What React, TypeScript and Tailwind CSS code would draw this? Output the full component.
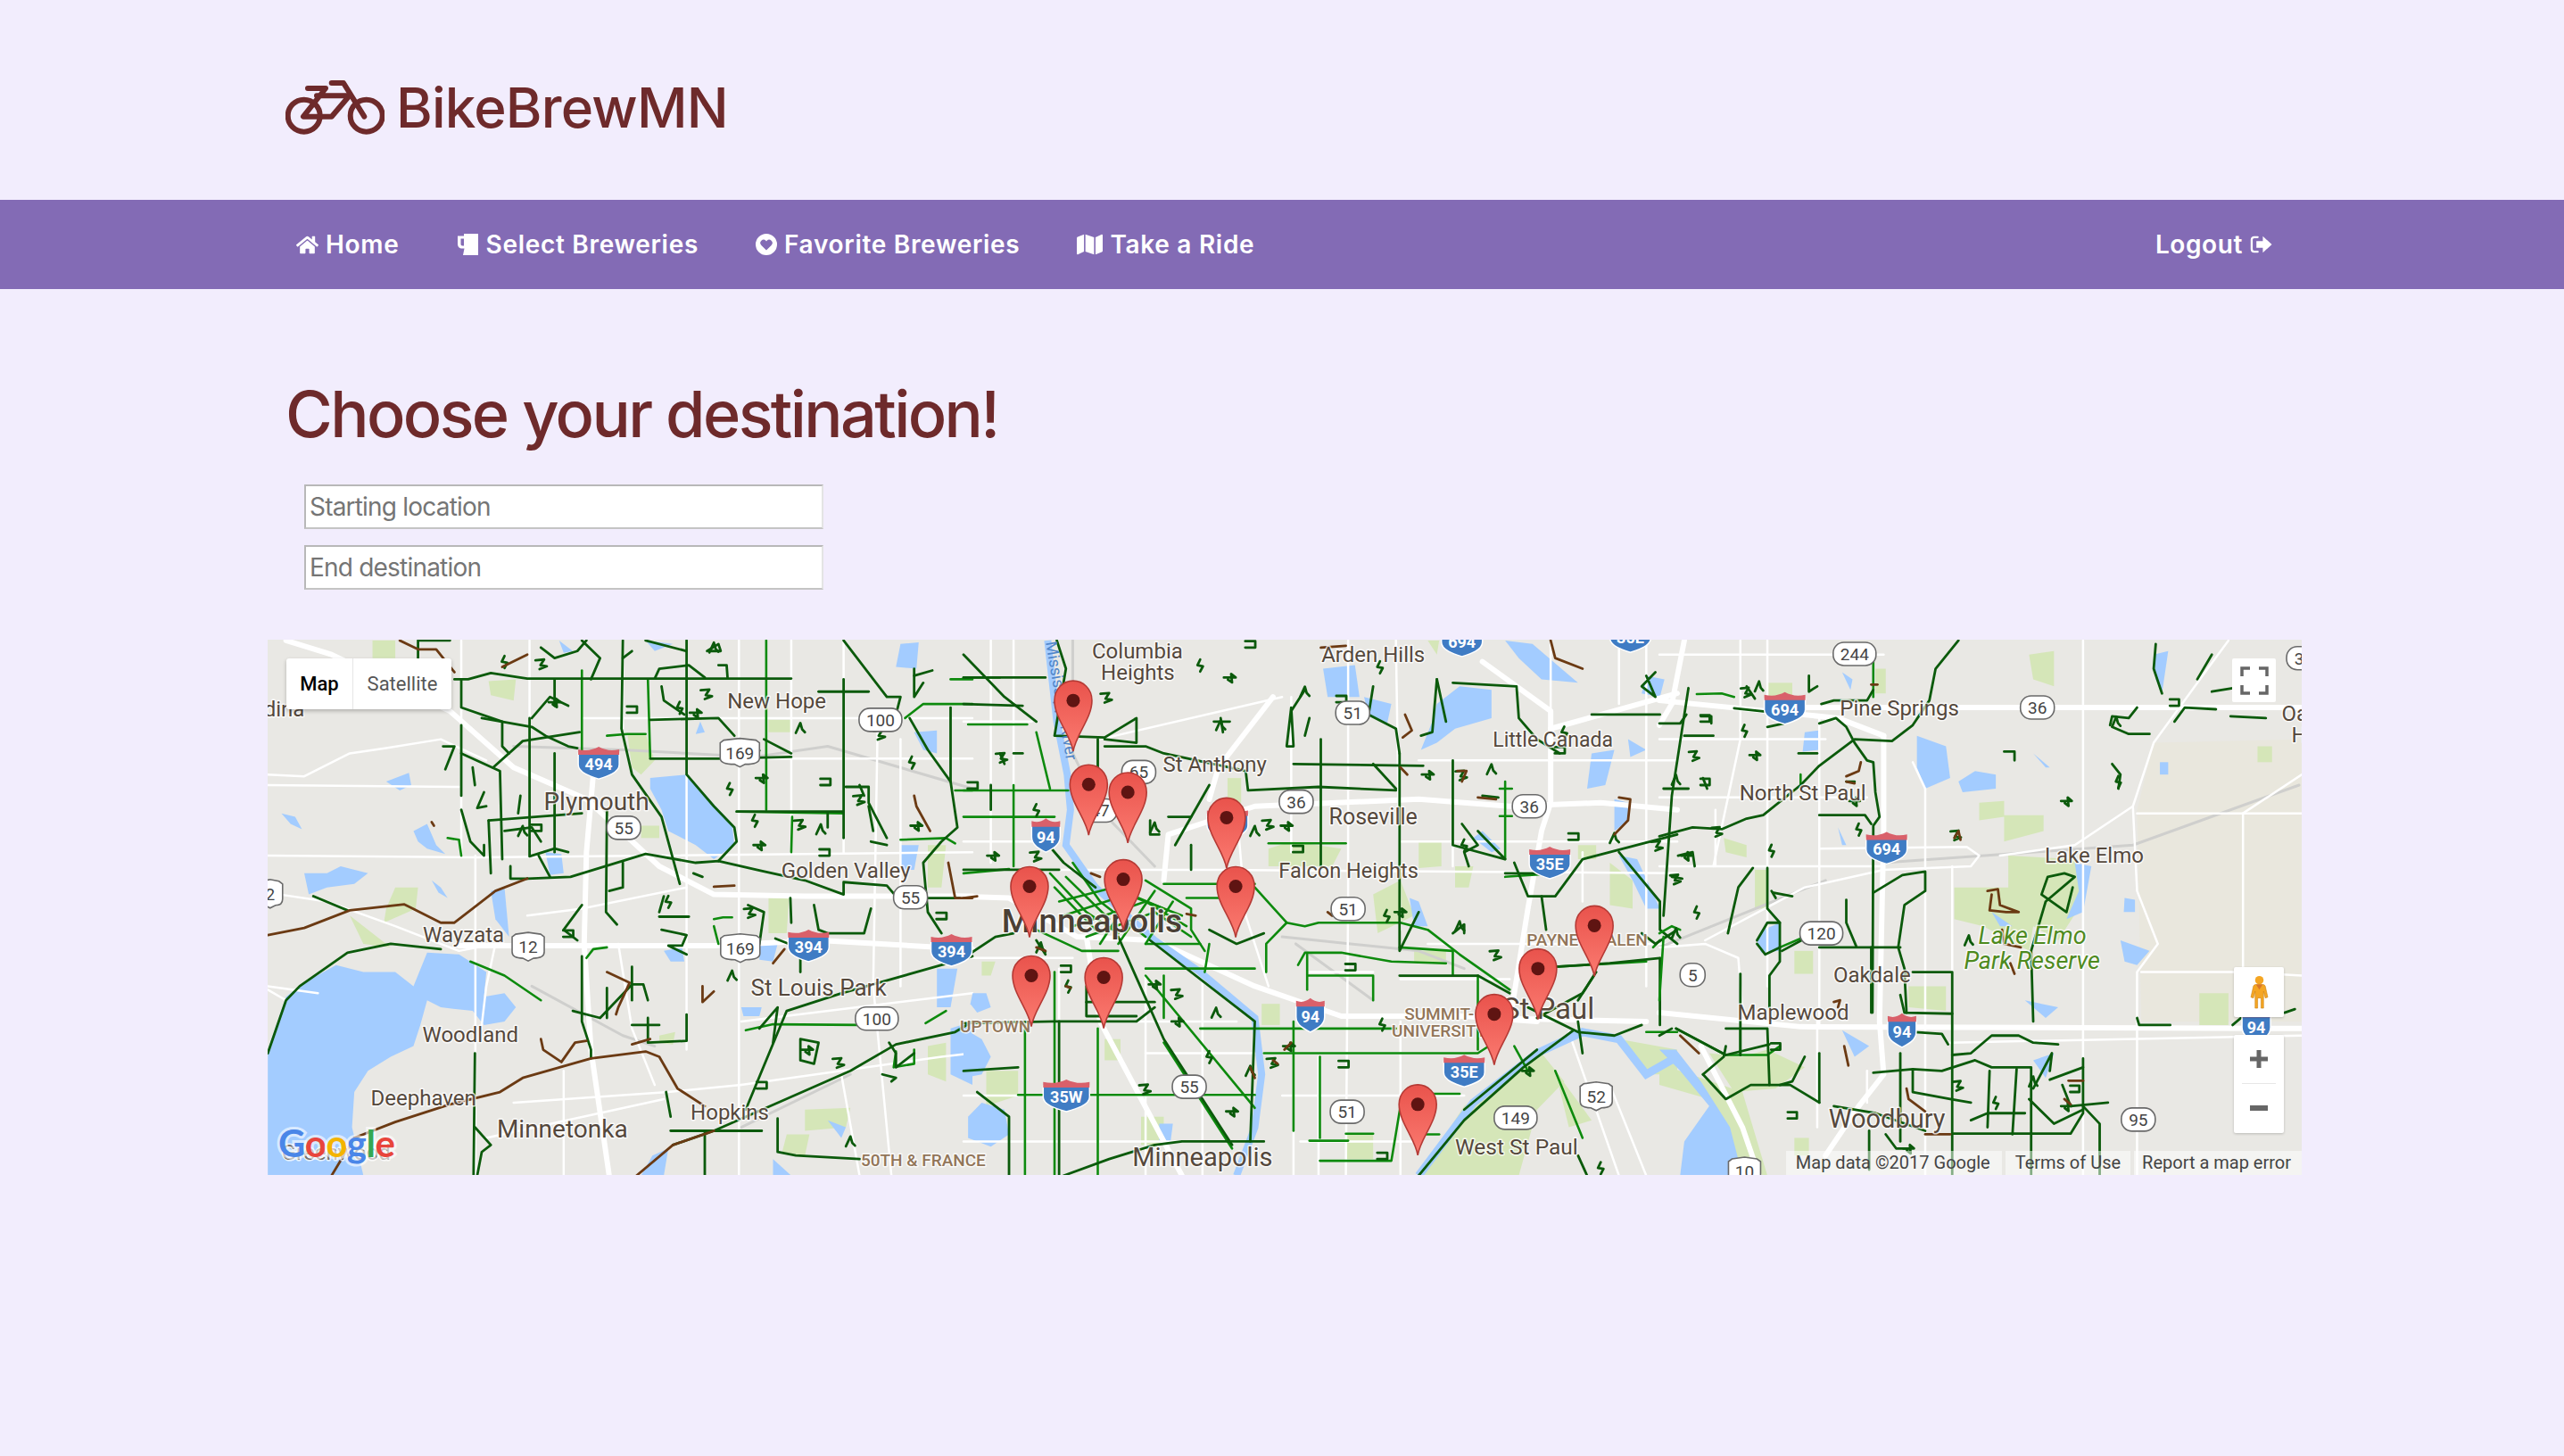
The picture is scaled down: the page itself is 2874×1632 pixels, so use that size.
import React from "react";
import { FaHome, FaMap } from "react-icons/fa";

// crop space transforms, traced coordinates are kept per map section
const A = "matrix(0.5102 0 0 0.3954 -10 -7)";
const B = "matrix(0.5102 0 0 0.3954 780 -7)";
const C = "matrix(0.4656 0 0 0.3954 1560 -7)";
const pa = (x: number, y: number) => [x * 0.5102 - 10, y * 0.3954 - 7];
const pb = (x: number, y: number) => [x * 0.5102 + 780, y * 0.3954 - 7];
const pc = (x: number, y: number) => [x * 0.4656 + 1560, y * 0.3954 - 7];

const DARK = "#0b5a0b";
const BRIGHT = "#0d8a0d";
const BROWN = "#6b3a13";
const WATER = "#a3ccff";
const PARK = "#d5e6b8";
const LAND = "#e9e8e4";

const water = {
  a: [
    "20,1180 60,1030 100,990 170,940 230,960 300,960 340,1000 370,905 440,910 500,960 495,1030 540,1020 565,1060 540,1100 495,1110 470,1070 400,1060 370,1040 355,1110 340,1170 290,1200 240,1240 210,1300 205,1400 230,1537 20,1537",
    "860,410 940,400 1040,540 1045,600 1000,640 960,600 900,560 885,500 860,440",
    "280,420 330,395 335,430 310,445",
    "340,560 370,540 390,600 410,625 370,610 350,590",
    "100,680 150,680 180,660 240,680 210,710 150,720 110,740",
    "50,510 80,520 95,555 70,540",
    "630,620 665,625 670,680 640,685",
    "510,730 540,720 550,860 520,810",
    "380,700 400,720 415,750 395,735",
    "1410,30 1450,25 1445,100 1400,95",
    "850,20 910,30 870,50",
    "660,20 690,50 670,55",
    "1440,280 1490,275 1490,340 1460,330",
    "1490,950 1535,950 1520,1060 1490,1060",
    "1520,1120 1568,1100 1568,1280 1520,1250",
    "1060,1060 1105,1060 1100,1085 1065,1085",
    "1100,880 1140,880 1130,930 1100,925",
    "890,900 930,890 935,930 905,930",
    "1250,1380 1290,1400 1280,1430",
    "865,1480 900,1460 890,1537 840,1537",
    "970,250 980,280 960,285",
    "1410,600 1450,600 1440,670 1410,670",
    "1130,1490 1170,1537 1130,1537",
  ],
  b: [
    "790,100 860,90 870,180 800,180",
    "880,180 940,200 930,260 890,230",
    "1040,200 1090,150 1160,160 1160,240 1080,270 1040,310 1005,330 1030,250",
    "1190,20 1250,30 1350,140 1270,130 1220,70",
    "1380,340 1430,330 1410,430 1370,440",
    "1430,470 1460,480 1460,530 1430,560",
    "1500,120 1540,130 1530,180 1490,170",
    "1440,630 1480,640 1530,780 1500,780 1470,700",
    "1120,580 1140,560 1180,610 1160,620",
    "0,1120 40,1150 60,1200 40,1250 0,1260",
    "40,1330 90,1350 100,1420 60,1455 10,1430 10,1370",
    "20,1020 50,1020 60,1060 30,1075 15,1050",
    "430,1390 460,1390 455,1440 430,1440",
    "980,750 1000,760 1020,830 990,830",
    "1460,300 1500,330 1465,350",
  ],
  c: [
    "720,420 760,390 810,400 810,440 730,450",
    "620,290 690,320 700,410 640,440 620,380",
    "350,280 385,275 385,330 345,335",
    "440,110 465,130 460,160",
    "1000,650 1040,660 1020,790 980,810 1010,730",
    "800,790 850,830 820,830",
    "1110,870 1180,900 1150,940 1120,930",
    "430,550 450,600 440,600",
    "250,840 290,820 290,900 245,905 235,870",
    "1190,60 1225,50 1210,170 1195,130",
    "0,1180 40,1180 100,1270 170,1400 200,1537 50,1537 60,1440 120,1340 50,1240",
    "900,1210 950,1190 930,1260",
    "440,1125 505,1170 470,1200",
    "1120,750 1145,755 1145,790 1118,790",
    "900,340 940,380 930,380",
    "1205,365 1225,365 1225,400 1205,400",
    "880,1040 960,1060 930,1090",
  ],
};

const parks = {
  a: [
    "810,285 850,285 870,360 840,400 820,380",
    "505,135 565,130 560,190 510,175",
    "1120,245 1170,245 1170,280 1120,280",
    "1120,750 1165,750 1160,850 1120,850",
    "300,720 350,720 345,780 275,820 280,780",
    "200,800 290,890 230,880",
    "80,1290 170,1260 190,1310 100,1340",
    "1200,1350 1300,1345 1290,1400 1200,1410",
    "1160,1420 1210,1420 1200,1480 1150,1470",
    "1470,1170 1510,1160 1510,1270 1470,1250",
    "250,20 300,20 300,70 250,70",
    "840,545 880,545 880,580 840,580",
    "1470,600 1510,600 1500,720 1470,720",
    "880,1140 915,1130 910,1165 880,1160",
  ],
  b: [
    "580,410 610,410 610,480 580,480",
    "670,610 720,590 830,610 810,660 670,660",
    "1000,590 1050,590 1050,660 1000,665",
    "1080,660 1120,660 1110,720 1080,720",
    "900,740 960,700 990,800 910,850",
    "990,900 1060,900 1060,940 990,930",
    "655,1050 695,1050 695,1110 655,1110",
    "390,1370 440,1370 440,1450 390,1450",
    "310,1150 345,1150 345,1210 310,1210",
    "50,1240 120,1240 120,1310 50,1340",
    "1100,1340 1270,1190 1320,1270 1260,1350 1220,1537 1000,1537",
    "1300,1240 1380,1380 1330,1400",
    "1440,1150 1568,1180 1568,1250 1500,1250",
    "840,1420 900,1420 900,1490 840,1490",
    "40,930 70,930 60,970 40,970",
    "1020,20 1045,20 1040,60",
    "1350,600 1390,600 1390,640 1350,640",
    "1420,650 1470,700 1470,780 1420,770",
  ],
  c: [
    "890,60 950,50 950,150 900,130",
    "770,480 830,475 830,515 925,515 925,560 830,590 830,520 770,530",
    "710,720 840,720 840,630 1000,640 1020,760 960,870 900,830 890,900 780,830 710,810",
    "0,1220 100,1260 200,1300 260,1537 200,1537 120,1320 0,1280",
    "120,1190 200,1200 260,1180 350,1230 280,1290 180,1300",
    "230,670 260,670 260,780 230,780",
    "155,580 210,600 210,635 160,620",
    "520,100 545,100 545,170 520,170",
    "1300,1020 1370,1020 1370,1110 1300,1110",
    "600,1000 690,1000 690,1070 600,1060",
    "1440,320 1475,320 1475,365 1440,365",
    "325,1430 360,1430 360,1480 325,1480",
    "325,900 370,900 370,965 325,965",
    "260,140 320,140 320,180 260,180",
  ],
};

const roads = {
  a: {
    thick: [
      "60,20 160,60 420,220 560,380 720,470 880,660 1000,740 1200,745 1568,745",
      "440,885 1000,885 1230,870 1568,895",
      "735,400 720,620 715,880 730,1180 770,1537",
    ],
    thin: [
      "20,400 100,405 200,340 280,325 400,300 500,360",
      "20,630 480,635 1568,620",
      "20,1000 130,1020",
      "20,735 150,760 300,830 440,900 520,880",
      "520,880 500,1000 490,1110",
      "476,630 476,1537",
      "1055,20 1055,1537",
      "940,20 940,1180",
      "1170,20 1170,620",
      "1285,20 1285,620",
      "445,20 445,630",
      "595,20 595,630",
      "20,430 440,435",
      "20,1010 60,1040",
      "710,240 1568,240",
      "940,355 1568,355",
      "800,20 800,270",
      "1360,240 1350,1000 1390,1537",
      "1410,300 1410,1000",
      "590,800 710,780 940,720",
      "790,880 820,1120 870,1280",
      "1060,1280 1500,1200 1568,1190",
      "560,1330 900,1300 1060,1280",
      "500,1430 890,1320",
      "1060,1100 1568,1020",
      "1280,1250 1320,1537",
      "670,1240 670,1537",
    ],
    gray: ["560,320 800,330 1090,350 1250,320 1568,440", "600,1000 800,1140 870,1170", "1060,1400 1300,1250"],
  },
  b: {
    thick: [
      "-20,745 100,750 250,860 420,870 640,1000 830,1085 1100,1085 1260,1100",
      "270,860 300,1100 480,1537",
      "440,700 450,570 640,490 1000,470 1200,490 1400,480 1568,500",
      "1130,1090 1500,1100",
      "1290,270 1568,170",
      "680,180 560,380 540,470",
      "1140,80 1290,220 1290,480 1270,560 1240,780 1200,1100",
    ],
    thin: [
      "0,670 110,670 560,670 1568,680",
      "0,445 240,445",
      "0,590 210,590",
      "110,20 110,660",
      "60,20 60,650",
      "600,500 620,800 670,1000",
      "845,20 845,760 840,1537",
      "950,20 960,840",
      "785,300 785,660",
      "720,180 720,620",
      "0,920 240,920",
      "0,1100 600,1100",
      "210,950 210,1537",
      "135,1100 135,1537",
      "295,1120 295,1537",
      "400,970 400,1537",
      "525,950 525,1537",
      "725,1100 725,1537",
      "780,1200 780,1537",
      "960,1100 960,1537",
      "400,1190 1100,1190",
      "0,1310 640,1310",
      "700,1310 1100,1310",
      "0,1440 640,1440",
      "740,1440 1000,1440",
      "0,250 150,250",
      "300,300 700,180",
      "1075,360 1075,660",
      "1190,420 1190,640",
      "960,590 1568,590",
      "1000,360 1568,360",
      "1290,20 1290,270",
      "1440,20 1440,200",
      "1360,620 1360,760",
      "1020,880 1568,880",
      "1500,20 1500,1000",
      "960,980 1200,980",
      "760,960 900,960",
      "1420,1280 1500,1537",
      "1330,1130 1440,1537",
    ],
    gray: [
      "240,20 240,340 300,500 420,660",
      "700,860 1000,900 1100,950",
      "730,880 900,1040",
    ],
  },
  c: {
    thick: [
      "540,290 540,560 530,1100 540,1250 480,1340 400,1480",
      "60,20 30,200 0,260",
      "0,190 430,240 540,290",
      "350,210 1547,210",
      "0,1075 340,1115 1547,1120",
      "100,1170 200,1400 240,1537",
    ],
    thin: [
      "0,60 540,60",
      "195,20 195,300 130,660",
      "260,20 260,1000",
      "385,240 385,1120",
      "0,465 500,465",
      "135,500 135,660",
      "385,610 740,605 770,630 750,660 540,670 350,720 110,870",
      "705,660 705,1537",
      "1020,20 1020,1537",
      "1140,490 1190,310 1320,100 1370,20",
      "1140,490 1000,600 820,630",
      "1140,490 1150,730 1200,880 1150,960 1150,1537",
      "1150,510 1547,510",
      "1405,510 1405,1000",
      "1405,510 1547,400",
      "640,440 640,1537",
      "0,660 540,660",
      "0,890 110,880 190,920 200,1070",
      "1160,960 1400,960 1547,970",
      "700,1160 1547,1140",
      "380,1100 380,1400",
      "500,1240 500,1330",
      "0,300 400,300",
      "610,365 640,440",
    ],
    gray: ["540,650 1140,600 1540,430", "0,890 400,700"],
  },
};

const trails = {
  a: {
    dark: [
      "430,130 460,130 510,112 590,128 870,128 1170,128",
      "870,128 880,100 945,90 980,125",
      "1010,90 1028,90 1030,125",
      "445,130 445,210 535,250 535,320 550,340",
      "490,240 600,265 630,290 680,320 700,325",
      "595,240 595,632 650,610 680,620",
      "600,240 640,180 680,205",
      "650,130 650,205",
      "800,20 797,270 820,400 885,520 925,710",
      "940,20 940,400 1000,490 1045,550 1050,590 1010,645",
      "860,355 1010,355 1170,350",
      "860,245 1010,240 1045,290",
      "885,150 890,190 935,230",
      "1110,300 1170,340",
      "445,260 445,460",
      "445,340 530,390 535,640",
      "515,380 580,305 705,280",
      "445,500 465,590 495,630 495,600",
      "505,530 510,680",
      "505,530 710,510",
      "650,340 650,620",
      "540,560 600,550 620,590",
      "615,630 640,690",
      "553,660 553,695 590,695",
      "590,695 685,690 850,625 960,650 1010,645 1100,672 1200,700 1285,740 1285,705 1380,715 1400,745 1470,750 1540,750",
      "765,500 763,790 787,825",
      "800,650 800,720 770,730",
      "20,1190 60,1040 90,1000 195,905 290,880 400,895",
      "120,745 195,785",
      "710,770 670,840 700,870",
      "710,915 710,1100 730,1180 730,1205",
      "690,1070 750,1090 820,995 845,995 855,1040",
      "820,945 820,1040",
      "765,1005 765,1090",
      "820,1110 880,1110",
      "855,1090 855,1160 940,1155 940,1080",
      "880,803 945,803",
      "885,840 940,855 930,885 900,885 940,910",
      "880,790 890,745",
      "1135,865 1165,880",
      "1070,1350 1160,1070 1280,1020 1500,940 1568,915",
      "910,1450 1000,1410 1300,1240 1400,1165 1530,1130 1568,1100",
      "475,1190 472,1537",
      "475,1400 510,1450 490,1470 480,1537",
      "1140,1375 1140,1470 1180,1480 1320,1490",
      "905,1410 1105,1410",
      "980,1410 980,1537",
      "895,1300 905,1370",
      "1290,435 1340,435 1340,480 1380,580",
      "1285,20 1380,180 1410,180 1400,230",
      "1230,165 1340,165",
      "1440,120 1480,105",
      "1440,100 1440,180 1460,140",
      "1168,750 1170,820",
      "1220,770 1230,840 1250,850 1330,850 1345,780",
      "1075,770 1110,790 1100,880",
      "1190,920 1190,960",
      "1190,1150 1230,1160 1220,1220 1190,1210 1190,1150",
      "1385,1160 1400,1190 1400,1230 1440,1190",
      "1370,1250 1400,1260 1390,1270",
      "1100,1120 1140,1060 1130,1160",
      "1430,240 1470,330 1520,420 1535,550 1500,590 1460,650 1470,790 1500,850",
      "1520,210 1520,420",
      "1050,505 1285,505",
      "1285,130 1285,580",
      "1330,460 1320,430",
      "1345,590 1380,600",
      "420,20 350,20 350,70",
      "620,40 650,70 700,50 720,20",
      "710,20 750,70 730,130",
      "800,70 820,50",
      "985,50 1010,30 1015,50 990,50",
      "405,320 430,320 410,385",
      "470,380 475,430",
      "495,450 480,495 500,490",
      "575,460 570,510",
      "850,20 940,50",
      "955,680 975,690",
      "1250,510 1250,550",
      "1340,490 1350,560",
    ],
    bright: [
      "710,105 710,330",
      "855,130 860,350",
      "1115,20 1115,500",
      "1050,505 1285,510",
      "1172,520 1170,620",
      "1070,1125 1130,1108 1320,1110",
      "465,930 540,970 620,1040",
      "415,580 440,585 445,630",
      "720,920 735,895 765,890",
      "765,290 810,285 850,285",
      "1000,810 1020,805 1040,805",
      "1000,830 1010,880",
      "1420,240 1460,200 1568,200",
      "1410,585 1510,580 1530,595",
      "1520,130 1568,130",
      "1530,445 1568,445",
      "1465,1105 1510,1070",
      "1025,1410 1105,1410",
      "1400,1185 1395,1230 1440,1220 1440,1180",
    ],
    brown: [
      "20,855 100,835 200,785 320,768 400,820 430,820 520,730 590,695",
      "210,1430 300,1385 420,1335 530,1300 580,1260 730,1205 850,1185 880,1200 920,1290 980,1340",
      "160,1537 210,1430",
      "830,1537 910,1450 1000,1410",
      "765,960 815,990 790,1060 785,1080",
      "620,1150 625,1180 665,1215 695,1160 720,1155",
      "975,1000 975,1045 1000,1015",
      "820,1165 860,1150",
      "1000,718 1045,715",
      "1130,935 1155,895",
      "1515,650 1530,750 1568,750",
      "1440,460 1445,490 1475,560",
      "310,20 350,45 390,45 430,110",
      "535,95 590,60",
      "380,535 385,545",
    ],
  },
  b: {
    dark: [
      "0,60 90,180 160,250",
      "0,125 180,125",
      "0,200 130,205",
      "205,20 225,100 200,290 310,295 380,240 380,310 310,300",
      "295,300 295,400",
      "310,320 400,320 440,340 620,390 625,445 780,435 950,445",
      "725,370 1010,375",
      "785,300 785,660",
      "958,340 958,900 1000,790",
      "958,970 1130,970 1200,1020",
      "540,430 465,600",
      "500,600 500,670",
      "450,520 500,520",
      "410,530 410,570 430,570",
      "1075,140 1215,150 1220,240 1260,300 1310,340",
      "1040,130 1030,280 1005,290",
      "720,210 710,320 725,320 720,210",
      "900,150 890,230 950,270 958,340",
      "1060,250 1040,130",
      "1075,360 1075,600 1190,640 1130,560",
      "1095,540 1130,600 1100,620 1110,660",
      "1190,680 1300,680",
      "1210,650 1240,745 1300,745 1360,640 1420,620 1568,570",
      "1440,620 1530,760 1530,840 1568,880",
      "1270,745 1280,840",
      "1380,230 1530,230",
      "1500,120 1520,180 1490,150 1520,110",
      "1260,1090 1360,1020 1390,960",
      "1350,1040 1385,970",
      "1300,945 1420,935 1530,920 1530,1110",
      "1240,1060 1350,1130 1430,1140 1490,1110",
      "1000,1537 1100,1380 1230,1230 1340,1125",
      "1100,1350 1260,1180",
      "1350,1100 1360,1190",
      "540,840 600,880 660,850",
      "340,860 440,1150 590,1450",
      "410,870 640,1100 630,1440",
      "0,920 70,860 110,850",
      "160,870 180,910",
      "0,1240 120,1230",
      "30,1300 100,1370 100,1537",
      "0,1105 200,1100 380,1100 420,1060",
      "210,1100 210,1537",
      "270,1045 420,1045",
      "270,1000 270,1085 380,1085",
      "220,1537 320,1490 420,1450 480,1440 660,1440",
      "0,670 210,670",
      "950,440 900,370",
      "1140,460 1175,465",
      "1370,1537 1350,1480",
      "180,590 220,650 290,720",
      "60,430 60,500",
      "130,340 110,340",
      "80,340 90,370",
      "550,250 585,250",
      "565,240 570,280",
      "750,160 720,220",
      "760,240 750,290",
      "1490,850 1520,880 1568,840",
      "1075,850 1100,825 1100,850",
    ],
    bright: [
      "0,520 200,520",
      "0,445 230,445",
      "110,430 110,660",
      "0,125 80,125",
      "10,258 140,258",
      "160,280 190,440",
      "670,595 840,595",
      "640,720 710,820 750,830 780,820 960,820 1020,840 1090,910 1200,1010",
      "710,820 665,880 665,960",
      "440,710 640,710",
      "490,750 560,750",
      "400,700 500,780 500,840 530,900",
      "240,650 300,760 400,860",
      "190,680 270,790 340,850",
      "210,760 330,720 440,780",
      "220,800 360,740 480,800",
      "240,830 400,760 490,830",
      "270,860 420,790 500,860",
      "200,720 290,840",
      "225,690 320,810",
      "380,720 300,880",
      "420,730 340,880",
      "460,760 400,880",
      "160,840 260,900 340,900",
      "400,880 520,880",
      "735,940 750,905 830,905 940,930 1060,935",
      "755,910 755,1010",
      "755,970 900,970 900,1040",
      "520,1120 950,1120",
      "660,1190 1130,1190 1190,1140",
      "725,1100 725,1410",
      "783,1200 783,1430",
      "760,1438 845,1438",
      "840,1418 900,1418",
      "783,1495 940,1495 960,1340",
      "1020,1305 1090,1305",
      "1010,1420 1045,1420",
      "200,960 200,1537",
      "135,1110 135,1537",
      "295,1120 295,1537",
      "400,970 640,1345",
      "120,1308 640,1308",
      "440,1160 590,1460",
      "400,950 640,950",
      "440,970 440,1090",
      "540,880 530,960",
      "0,680 100,668",
      "1130,970 1130,1180",
      "1075,900 1075,970",
      "958,890 1075,900",
      "1190,420 1190,640",
      "1178,440 1205,440",
      "1178,518 1205,518",
      "1190,690 1300,680",
      "1300,1240 1360,1430",
      "1210,1170 1240,1240",
      "1300,945 1500,930",
      "1500,1130 1568,1130",
      "1515,890 1530,870",
    ],
    brown: [
      "970,230 985,275 965,295",
      "785,40 840,35",
      "1290,20 1300,70 1360,100",
      "1440,465 1465,470 1460,530 1430,570",
      "0,750 30,745",
      "800,790 810,800",
      "1085,390 1105,390 1095,420",
      "960,380 975,400",
      "280,680 300,690",
      "630,1230 640,1260",
      "680,1210 690,1220",
      "705,1180 720,1160",
      "225,1000 235,1005",
      "1130,465 1170,470",
      "160,890 180,900",
      "490,795 510,800",
    ],
  },
  c: {
    dark: [
      "720,20 665,100 650,190 610,260 560,305 470,300 385,375 340,430 250,515 210,525 150,555 80,550 0,575",
      "385,255 425,240 450,265 470,310 500,360 515,365 520,450 530,520 515,545 513,1075",
      "180,212 260,222",
      "70,155 30,460 10,800",
      "0,255 50,255 65,230",
      "60,290 130,290",
      "100,235 125,235 125,255",
      "210,150 230,185",
      "385,515 495,515 510,540",
      "450,420 470,420",
      "515,735 585,685 640,675 640,730 590,770 575,890 595,970",
      "450,755 450,820 475,890 385,890 580,890",
      "510,890 510,1075",
      "580,1025 590,1075 705,1078",
      "610,960 705,960 705,1537",
      "590,960 595,1075",
      "165,850 190,720 225,665",
      "260,665 260,780 290,820 290,930 265,970 265,1060",
      "295,900 350,865",
      "235,870 260,820 290,820",
      "235,880 255,910 290,890",
      "275,735 320,745",
      "195,965 195,1195",
      "40,1120 160,1195 265,1165",
      "160,1120 260,1120 265,1280",
      "105,1250 155,1200 160,1170",
      "105,1250 160,1320 220,1280 315,1280 385,1330",
      "385,1190 385,1330",
      "350,1200 320,1270 290,1280",
      "515,1245 610,1235 680,1240 760,1210 800,1230 895,1230 895,1537",
      "705,1195 750,1190 800,1140 865,1140 900,1160 960,1165",
      "610,1240 610,1300 700,1320 750,1330",
      "580,1190 580,1440",
      "615,1130 680,1135 695,1165",
      "705,1418 990,1418 1020,1360 1020,1205",
      "1020,1340 1060,1390 1060,1537",
      "940,1265 1020,1230",
      "795,1240 790,1400",
      "860,1235 850,1420",
      "900,1290 945,1190 940,1240",
      "890,1320 950,1390 1020,1350",
      "970,1280 990,1340 1080,1330",
      "750,1380 790,1360 880,1360",
      "420,1340 520,1360 640,1410",
      "505,1410 505,1520",
      "545,1420 570,1460 600,1460",
      "900,1100 895,900 930,760 1000,690 975,680 935,690 920,740 980,790 995,720",
      "1240,250 1265,210 1340,215",
      "1375,235 1460,240",
      "1085,260 1090,235 1130,240 1150,210",
      "1090,265 1130,285 1180,285",
      "1090,370 1110,400 1105,440",
      "1195,30 1190,100 1210,170",
      "1295,130 1330,60",
      "1330,165 1380,155",
      "1150,1090 1155,1110 1230,1110",
      "1380,1110 1400,1090",
      "1505,1075 1530,1065",
      "0,1140 30,1120",
      "335,340 380,340",
      "360,120 360,165 380,150",
      "45,630 80,620 85,660",
      "30,690 55,695",
      "105,410 115,440",
      "270,730 280,750",
      "10,440 70,440",
      "830,335 855,335 855,360",
      "260,265 300,255",
      "390,200 420,190 500,190 515,160",
    ],
    bright: [
      "90,172 150,170 180,180",
      "515,50 515,180",
      "340,400 340,430",
      "10,860 0,1040",
      "0,850 30,830 50,840",
      "40,1120 160,1195 260,1195 290,1170",
      "195,1120 195,1195",
      "290,890 350,860",
    ],
    brown: [
      "450,405 480,390 485,365",
      "450,420 470,425",
      "50,1140 95,1190",
      "790,730 815,725 820,770 865,790 835,790 795,785 800,740",
      "825,840 830,880 870,890",
      "845,935 855,965",
      "445,1170 455,1225",
      "595,1290 600,1320 640,1355",
      "640,1420 700,1420",
      "985,1268 1020,1268",
      "975,1320 990,1335",
      "420,1045 435,1040 430,1060",
      "510,145 525,145",
      "710,580 720,560 725,585",
    ],
  },
};

// small squiggles of the trail layer, stamped at the places they show up
const stamps = [
  [-14, -9, 5, -11, -3, 5, 11, 8, -5, 16],
  [-10, 14, 0, -14, 4, 4, 10, 12],
  [-11, -8, 11, -8, 11, 10, -11, 10],
  [0, -16, -6, 0, 6, 3, 0, 18],
  [-13, 0, 13, 0, 3, -10, 5, 14, -4, 6],
];
const bits = {
  a: [622, 85, 1000, 40, 820, 215, 925, 210, 960, 225, 985, 170, 1190, 268, 1245, 420, 1035, 440, 1105, 410, 1190, 540, 1235, 555, 1243, 620, 1090, 530, 1100, 600, 1080, 790, 1040, 970, 680, 850, 900, 760, 1205, 1180, 1275, 1215, 1300, 1440, 1105, 1280, 1435, 365, 1445, 545, 1365, 285, 580, 560, 610, 550, 540, 80, 650, 195, 1320, 470, 1090, 320, 1500, 800],
  b: [85, 350, 565, 260, 20, 430, 160, 500, 65, 630, 160, 630, 420, 550, 630, 30, 520, 90, 585, 125, 315, 180, 750, 165, 830, 185, 915, 95, 1020, 400, 1095, 400, 1160, 385, 1310, 330, 1320, 280, 710, 545, 670, 540, 640, 560, 735, 610, 930, 800, 960, 790, 1170, 910, 1090, 830, 850, 945, 920, 1108, 715, 1170, 680, 1215, 630, 1240, 835, 1220, 540, 1200, 590, 1355, 400, 1290, 170, 890, 225, 950, 230, 1000, 420, 995, 470, 1020, 555, 1075, 920, 1480, 1400, 1515, 1240, 1240, 1525, 600, 1430, 580, 1340, 575, 1100, 600, 470, 1100],
  c: [210, 165, 240, 150, 110, 240, 205, 275, 230, 345, 85, 345, 40, 415, 110, 420, 270, 615, 65, 630, 40, 695, 1100, 250, 1240, 195, 1105, 420, 980, 475, 715, 570, 745, 870, 320, 1365, 480, 555, 470, 475, 720, 1280, 900, 1270, 1000, 1290, 810, 1330, 600, 1460, 140, 560, 40, 850, 280, 1170, 90, 790, 980, 1340],
};

type Label = [number, number, string, number, string?, number?];
const DK = "#55483c";
const TAN = "#927558";
const labels: { p: (x: number, y: number) => number[]; list: Label[] }[] = [
  {
    p: pa,
    list: [
      [56, 236, "dina", 24],
      [1138, 212, "New Hope", 24],
      [742, 500, "Plymouth", 28],
      [1290, 692, "Golden Valley", 24],
      [450, 876, "Wayzata", 24],
      [1230, 1028, "St Louis Park", 26],
      [465, 1158, "Woodland", 24],
      [362, 1338, "Deephaven", 24],
      [667, 1430, "Minnetonka", 28],
      [1035, 1378, "Hopkins", 24],
      [170, 1492, "Greenwood", 24, "#77716a"],
      [1460, 1510, "50TH & FRANCE", 19, TAN, 500],
    ],
  },
  {
    p: pb,
    list: [
      [382, 72, "Columbia", 24],
      [383, 132, "Heights", 24],
      [900, 80, "Arden Hills", 24],
      [552, 392, "St Anthony", 24],
      [1295, 322, "Little Canada", 23],
      [900, 542, "Roseville", 25],
      [846, 692, "Falcon Heights", 23.5],
      [282, 848, "Minneapolis", 37, "#4a3f35", 500],
      [525, 1510, "Minneapolis", 29],
      [70, 1130, "UPTOWN", 19, TAN, 500],
      [1370, 885, "PAYNE PHALEN", 19, TAN, 500],
      [1045, 1095, "SUMMIT-", 19, TAN, 500],
      [1045, 1142, "UNIVERSITY", 19, TAN, 500],
      [1285, 1092, "St Paul", 33],
      [1215, 1478, "West St Paul", 24.5],
    ],
  },
  {
    p: pc,
    list: [
      [578, 232, "Pine Springs", 24],
      [345, 474, "North St Paul", 24],
      [1047, 650, "Lake Elmo", 24],
      [512, 990, "Oakdale", 24],
      [322, 1095, "Maplewood", 24],
      [548, 1400, "Woodbury", 29],
      [1530, 248, "Oa", 24],
      [1540, 308, "H", 24],
    ],
  },
];

function Lines({ list, color, width }: { list: string[]; color: string; width: number }) {
  return (
    <g fill="none" stroke={color} strokeWidth={width} strokeLinejoin="round" strokeLinecap="round">
      {list.map((d, i) => (
        <polyline key={i} points={d} vectorEffect="non-scaling-stroke" />
      ))}
    </g>
  );
}

function Section({ m, k }: { m: string; k: "a" | "b" | "c" }) {
  return (
    <g transform={m}>
      {parks[k].map((d, i) => (
        <polygon key={i} points={d} fill={PARK} />
      ))}
      {water[k].map((d, i) => (
        <polygon key={i} points={d} fill={WATER} />
      ))}
      <Lines list={roads[k].gray} color="#cfcfcd" width={3} />
      <Lines list={roads[k].thin} color="#ffffff" width={2.5} />
      <Lines list={roads[k].thick} color="#ffffff" width={6} />
    </g>
  );
}

function SectionTrails({ m, k }: { m: string; k: "a" | "b" | "c" }) {
  const b = bits[k];
  const squiggles: string[] = [];
  for (let i = 0; i < b.length; i += 2) {
    const s = stamps[(i / 2) % stamps.length];
    const pts: string[] = [];
    for (let j = 0; j < s.length; j += 2) pts.push(`${b[i] + s[j]},${b[i + 1] + s[j + 1]}`);
    squiggles.push(pts.join(" "));
  }
  return (
    <g transform={m}>
      <Lines list={trails[k].bright} color={BRIGHT} width={2.6} />
      <Lines list={trails[k].dark} color={DARK} width={2.8} />
      <Lines list={squiggles} color={DARK} width={2.8} />
      <Lines list={trails[k].brown} color={BROWN} width={2.8} />
    </g>
  );
}

function Interstate({ x, y, t, w = 46 }: { x: number; y: number; t: string; w?: number }) {
  const h = w < 40 ? 38 : 36;
  return (
    <g transform={`translate(${x - w / 2},${y - h / 2})`}>
      <path d={`M0 ${h * 0.2} H${w} V${h * 0.55} C${w} ${h * 0.8} ${w * 0.7} ${h * 0.92} ${w / 2} ${h} C${w * 0.3} ${h * 0.92} 0 ${h * 0.8} 0 ${h * 0.55} Z`} fill="#3f7cc4" stroke="#fff" strokeWidth={1.5} />
      <path d={`M0 ${h * 0.25} V${h * 0.08} C${w * 0.2} ${h * 0.14} ${w * 0.35} ${h * 0.1} ${w / 2} 0 C${w * 0.65} ${h * 0.1} ${w * 0.8} ${h * 0.14} ${w} ${h * 0.08} V${h * 0.25} Z`} fill="#d9606a" />
      <text x={w / 2} y={h * 0.72} textAnchor="middle" fontSize={18} fontWeight={700} fill="#fff" fontFamily="Roboto, sans-serif">
        {t}
      </text>
    </g>
  );
}

function StateRoad({ x, y, t }: { x: number; y: number; t: string }) {
  const w = 18 + t.length * 10;
  return (
    <g>
      <rect x={x - w / 2} y={y - 13} width={w} height={26} rx={12} fill="#fff" stroke="#6a6a6a" strokeWidth={1.6} />
      <text x={x} y={y + 7} textAnchor="middle" fontSize={19} fill="#444" fontFamily="Roboto, sans-serif">
        {t}
      </text>
    </g>
  );
}

function UsRoad({ x, y, t }: { x: number; y: number; t: string }) {
  const w = 20 + t.length * 8;
  return (
    <g>
      <path
        d={`M${x - w / 2} ${y - 11} L${x - w / 2 + 4} ${y - 14} L${x} ${y - 16} L${x + w / 2 - 4} ${y - 14} L${x + w / 2} ${y - 11} V${y + 6} Q${x + w / 2} ${y + 13} ${x + 6} ${y + 13} L${x} ${y + 16} L${x - 6} ${y + 13} Q${x - w / 2} ${y + 13} ${x - w / 2} ${y + 6} Z`}
        fill="#fff"
        stroke="#6a6a6a"
        strokeWidth={1.6}
      />
      <text x={x} y={y + 7} textAnchor="middle" fontSize={19} fill="#444" fontFamily="Roboto, sans-serif">
        {t}
      </text>
    </g>
  );
}

function Pin({ x, y }: { x: number; y: number }) {
  // x,y = centre of the head
  return (
    <g transform={`translate(${x},${y})`}>
      <path d="M0 57 C-3 38 -21 20 -21 0 C-21 -13 -11 -22 0 -22 C11 -22 21 -13 21 0 C21 20 3 38 0 57 Z" fill="url(#pinFill)" stroke="#b53a35" strokeWidth={1.6} />
      <circle cx={0} cy={0} r={7.5} fill="#5f1412" />
    </g>
  );
}

function at(p: (x: number, y: number) => number[], x: number, y: number) {
  const [a, b] = p(x, y);
  return { x: a, y: b };
}

const pins = [
  [241, 190],
  [275, 428],
  [361, 450],
  [578, 522],
  [598, 717],
  [351, 697],
  [145, 717],
  [149, 970],
  [308, 975],
  [998, 1335],
  [1166, 1079],
  [1262, 950],
  [1386, 828],
];

function MapCanvas() {
  return (
    <svg viewBox="0 0 2280 600" className="absolute inset-0 block h-full w-full">
      <defs>
        <linearGradient id="pinFill" x1="0" y1="0" x2="0" y2="1">
          <stop offset="0" stopColor="#e9534c" />
          <stop offset="1" stopColor="#fb7a70" />
        </linearGradient>
      </defs>
      <rect width="2280" height="600" fill={LAND} />
      <polygon transform={C} points="1150,500 1190,310 1547,300 1547,1100 1160,1100" fill="#e9e7dd" />
      <Section m={A} k="a" />
      <Section m={B} k="b" />
      <Section m={C} k="c" />
      <g transform={B}>
        <polyline
          points="185,20 205,250 228,400 235,500 225,600 290,720 420,870 520,960 640,1090 655,1250 640,1400 600,1537"
          fill="none"
          stroke={WATER}
          strokeWidth={8}
          vectorEffect="non-scaling-stroke"
        />
        <polyline
          points="1000,1537 1120,1330 1260,1190 1360,1130 1440,1150 1500,1250 1568,1200"
          fill="none"
          stroke={WATER}
          strokeWidth={9}
          vectorEffect="non-scaling-stroke"
        />
      </g>
      <SectionTrails m={A} k="a" />
      <SectionTrails m={B} k="b" />
      <SectionTrails m={C} k="c" />

      <text transform="translate(872,3) rotate(80)" fontSize={18} fill="#4f85c9" fontFamily="Roboto, sans-serif">
        Mississippi River
      </text>

      <g fontFamily="Roboto, sans-serif" textAnchor="middle" stroke="#ffffff" strokeOpacity={0.75} strokeWidth={3} paintOrder="stroke" strokeLinejoin="round">
        {labels.map((g) =>
          g.list.map(([x, y, t, s, c, w], i) => {
            const q = g.p(x, y);
            return (
              <text key={t + i} x={q[0]} y={q[1]} fontSize={s} fill={c ?? DK} fontWeight={w ?? 400}>
                {t}
              </text>
            );
          }),
        )}
        <g fill="#4e8a1e" fontStyle="italic" fontSize={27}>
          <text x={pc(898, 880)[0]} y={pc(898, 880)[1]}>
            Lake Elmo
          </text>
          <text x={pc(897, 950)[0]} y={pc(897, 950)[1]}>
            Park Reserve
          </text>
        </g>
      </g>

      <Interstate {...at(pa, 747, 367)} t="494" />
      <Interstate {...at(pa, 1208, 885)} t="394" />
      <Interstate {...at(pa, 1522, 898)} t="394" />
      <Interstate {...at(pb, 181, 572)} t="94" w={32} />
      <Interstate {...at(pb, 580, 540)} t="694" />
      <Interstate {...at(pb, 1288, 650)} t="35E" />
      <Interstate {...at(pb, 226, 1310)} t="35W" w={52} />
      <Interstate {...at(pb, 762, 1082)} t="94" w={32} />
      <Interstate {...at(pb, 1100, 1240)} t="35E" />
      <Interstate {...at(pb, 1095, 20)} t="694" />
      <Interstate {...at(pb, 1465, 8)} t="35E" />
      <Interstate {...at(pc, 302, 212)} t="694" />
      <Interstate {...at(pc, 547, 608)} t="694" />
      <Interstate {...at(pc, 584, 1125)} t="94" w={32} />
      <Interstate {...at(pc, 1437, 1112)} t="94" w={32} />

      <StateRoad {...at(pa, 1366, 245)} t="100" />
      <StateRoad {...at(pa, 802, 551)} t="55" />
      <StateRoad {...at(pa, 1432, 748)} t="55" />
      <StateRoad {...at(pa, 1358, 1092)} t="100" />
      <StateRoad {...at(pb, 385, 393)} t="65" />
      <StateRoad {...at(pb, 300, 502)} t="47" />
      <StateRoad {...at(pb, 855, 225)} t="51" />
      <StateRoad {...at(pb, 731, 477)} t="36" />
      <StateRoad {...at(pb, 1243, 490)} t="36" />
      <StateRoad {...at(pb, 845, 781)} t="51" />
      <StateRoad {...at(pb, 496, 1285)} t="55" />
      <StateRoad {...at(pb, 843, 1356)} t="51" />
      <StateRoad {...at(pb, 1213, 1373)} t="149" />
      <StateRoad {...at(pc, 470, 58)} t="244" />
      <StateRoad {...at(pc, 910, 210)} t="36" />
      <StateRoad {...at(pc, 390, 850)} t="120" />
      <StateRoad {...at(pc, 80, 968)} t="5" />
      <StateRoad {...at(pc, 1153, 1378)} t="95" />
      <StateRoad {...at(pc, 1540, 70)} t="3" />
      <UsRoad {...at(pa, 1057, 338)} t="169" />
      <UsRoad {...at(pa, 1058, 892)} t="169" />
      <UsRoad {...at(pa, 592, 888)} t="12" />
      <UsRoad {...at(pa, 25, 738)} t="2" />
      <UsRoad {...at(pb, 1390, 1312)} t="52" />
      <UsRoad {...at(pc, 205, 1525)} t="10" />

      {pins.map(([x, y], i) => (
        <Pin key={i} {...at(pb, x, y)} />
      ))}

      {/* google mark */}
      <text x={12} y={580} fontFamily="Lato, sans-serif" fontSize={42} fontWeight={700} stroke="#ffffff" strokeOpacity={0.6} strokeWidth={6} paintOrder="stroke" letterSpacing={-0.5}>
        <tspan fill="#4a86e8">G</tspan>
        <tspan fill="#e8453c">o</tspan>
        <tspan fill="#f4b400">o</tspan>
        <tspan fill="#4a86e8">g</tspan>
        <tspan fill="#34a853">l</tspan>
        <tspan fill="#e8453c">e</tspan>
      </text>
    </svg>
  );
}

function Logo() {
  return (
    <svg viewBox="0 0 111 62" className="h-[62px] w-[111px]" fill="none" stroke="#6e2a2b" strokeWidth={6} strokeLinecap="round" strokeLinejoin="round">
      <circle cx={20.7} cy={40.7} r={18} />
      <circle cx={90.7} cy={40.7} r={18} />
      <path d="M25 10 H45 L20 41.7 H51.7 L71.7 18.3 H35" />
      <path d="M51.7 4 H65 L88.3 41.7" />
    </svg>
  );
}

function HeartCircle() {
  return (
    <svg viewBox="0 0 24 24" className="h-6 w-6" fill="#fff">
      <path
        fillRule="evenodd"
        d="M12 0a12 12 0 1 0 0 24 12 12 0 0 0 0-24Zm0 18.5-5.6-5.6a3.6 3.6 0 0 1 0-5.1 3.6 3.6 0 0 1 5 0l.6.6.6-.6a3.6 3.6 0 0 1 5 0 3.6 3.6 0 0 1 0 5.1L12 18.5Z"
      />
    </svg>
  );
}

function Mug() {
  return (
    <svg viewBox="0 0 25 24" className="h-6 w-[25px]" fill="#fff">
      <path
        fillRule="evenodd"
        d="M8 0H24V24H7L8.500 16.500H6C3 16.500 1 14.500 1 11.500V2.500H8ZM4.500 5.500V11.500C4.500 12.800 5.200 13.500 6.500 13.500H8V5.500Z"
      />
    </svg>
  );
}

function SignOut() {
  return (
    <svg viewBox="0 0 26 22" className="h-[22px] w-[25px]" fill="#fff">
      <path d="M9 2.500H5A3 3 0 0 0 2 5.500v11a3 3 0 0 0 3 3h4" fill="none" stroke="#fff" strokeWidth={2.4} strokeLinecap="round" />
      <path d="M15 1.500 25.500 11 15 20.500V15H7.500V7H15Z" />
    </svg>
  );
}

function NavItem({ icon, label }: { icon: React.ReactNode; label: string }) {
  return (
    <a className="flex h-full items-center gap-2 px-8 text-[28px] font-semibold tracking-[0.7px] text-white">
      {icon}
      {label}
    </a>
  );
}

export default function App() {
  return (
    <div className="min-h-[1632px] bg-[#f2edfd] font-['Inter',sans-serif]">
      <header className="flex h-[224px] items-center pl-[320px] pt-[16px]">
        <Logo />
        <h1 className="ml-[13px] text-[62px] font-medium tracking-[-0.8px] text-[#6e2a2b]">BikeBrewMN</h1>
      </header>

      <nav className="flex h-[100px] items-center bg-[#836bb5] pl-[300px] pr-[327px]">
        <NavItem icon={<FaHome className="h-[25px] w-[25px]" />} label="Home" />
        <NavItem icon={<Mug />} label="Select Breweries" />
        <NavItem icon={<HeartCircle />} label="Favorite Breweries" />
        <NavItem icon={<FaMap className="h-[26px] w-[29px]" />} label="Take a Ride" />
        <a className="ml-auto flex items-center gap-2 text-[28px] font-semibold tracking-[0.6px] text-white">
          Logout
          <SignOut />
        </a>
      </nav>

      <main className="ml-[300px] w-[2280px]">
        <h2 className="pl-[20px] pt-[100px] text-[72px] leading-[80px] font-medium tracking-[-2.6px] text-[#6e2a2b]">Choose your destination!</h2>
        <div className="mt-[39px] flex flex-col gap-[18px] pl-[41px]">
          <input readOnly placeholder="Starting location" className="h-[50px] w-[582px] border-2 border-t-[#b8b8b8] border-r-[#e4e4e4] border-b-[#c4c4c4] border-l-[#b8b8b8] bg-white px-[4px] font-['Inter',sans-serif] text-[28px] tracking-[-0.8px] placeholder:text-[#757575]" />
          <input readOnly placeholder="End destination" className="h-[50px] w-[582px] border-2 border-t-[#b8b8b8] border-r-[#e4e4e4] border-b-[#c4c4c4] border-l-[#b8b8b8] bg-white px-[4px] font-['Inter',sans-serif] text-[28px] tracking-[-0.8px] placeholder:text-[#757575]" />
        </div>

        <div className="relative mt-[56px] h-[600px] w-[2280px] overflow-hidden font-['Roboto',sans-serif]">
          <MapCanvas />

          <div className="absolute left-[21px] top-[21px] flex h-[57px] rounded-[3px] bg-white text-[22px] shadow-[0_2px_4px_rgba(0,0,0,0.25)]">
            <div className="flex w-[75px] items-center justify-center border-r border-[#e6e6e6] font-medium text-black">Map</div>
            <div className="flex w-[110px] items-center justify-center text-[#565656]">Satellite</div>
          </div>

          <div className="absolute left-[2202px] top-[21px] flex h-[49px] w-[49px] items-center justify-center rounded-[2px] bg-white">
            <svg viewBox="0 0 32 32" className="h-[32px] w-[32px]" fill="none" stroke="#666" strokeWidth={3.5}>
              <path d="M2 11V2h9M21 2h9v9M30 21v9h-9M11 30H2v-9" />
            </svg>
          </div>

          <div className="absolute left-[2204px] top-[367px] flex h-[56px] w-[56px] items-center justify-center rounded-[2px] bg-white shadow-[0_1px_3px_rgba(0,0,0,0.2)]">
            <svg viewBox="0 0 24 40" className="h-[38px] w-[23px]">
              <circle cx={12} cy={6} r={5} fill="#f5a623" />
              <path d="M5 13a3 3 0 0 1 3-2h8a3 3 0 0 1 3 2l3 13-3 1-2-8v20h-3V27h-4v12H7V19l-2 8-3-1Z" fill="#f5a623" stroke="#c97f10" strokeWidth={0.6} />
              <path d="M8 11h8l-4 6Z" fill="#d9772b" />
            </svg>
          </div>

          <div className="absolute left-[2204px] top-[443px] flex h-[110px] w-[56px] flex-col items-center rounded-[2px] bg-white shadow-[0_1px_3px_rgba(0,0,0,0.2)]">
            <div className="flex h-[54px] items-center justify-center">
              <svg viewBox="0 0 20 20" className="h-5 w-5" fill="#666">
                <path d="M7.500 0h5v7.500H20v5h-7.500V20h-5v-7.500H0v-5h7.500Z" />
              </svg>
            </div>
            <div className="h-[1px] w-[38px] bg-[#e6e6e6]" />
            <div className="flex h-[54px] items-center justify-center">
              <div className="h-[6px] w-5 bg-[#666]" />
            </div>
          </div>

          <div className="absolute bottom-0 right-0 flex h-[27px] gap-[4px] text-[20px] leading-[27px] text-[#444]">
            <span className="bg-white/50 pl-[11px] pr-[13px]">Map data ©2017 Google</span>
            <span className="bg-white/50 px-[11px]">Terms of Use</span>
            <span className="bg-white/50 pl-[9px] pr-[12px]">Report a map error</span>
          </div>
        </div>
      </main>
    </div>
  );
}
